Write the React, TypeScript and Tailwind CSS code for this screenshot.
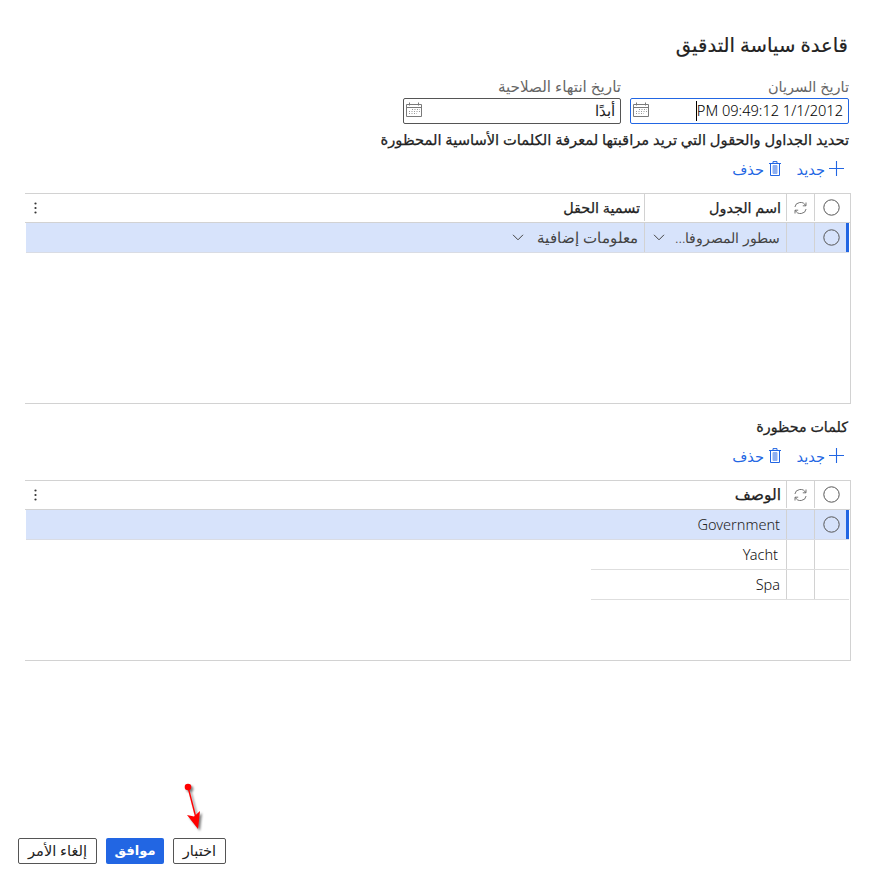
import type { ReactNode } from 'react';

const CalendarIcon = () => (
  <svg width="16" height="16" viewBox="0 0 16 16" fill="none" stroke="#7a7a7a" className="relative -top-px">
    <path d="M.5 2.5h15v12H.5zM.5 5.5h15M3.5 .5v3M12.5 .5v3" />
    <path d="M6 7.5h8M3 9.5h11M3 11.5h8" stroke="#999" strokeDasharray="1 1.5" />
  </svg>
);

const PlusIcon = () => (
  <svg width="15" height="15" viewBox="0 0 15 15" stroke="#2266e3" strokeWidth="1.1" className="relative -top-px">
    <path d="M7.5 0v15M0 7.5h15" />
  </svg>
);

const TrashIcon = () => (
  <svg width="12" height="15" viewBox="0 0 12 15" fill="none" stroke="#2266e3" className="relative -top-px">
    <path d="M0 2.5h12M1.5 2.5v12h9v-12M4 2V.6h4V2" />
    <path d="M4 4.5h4v8H4z" fill="#8fb0f1" stroke="#8fb0f1" />
  </svg>
);

const RefreshIcon = () => (
  <svg width="13" height="12" viewBox="0 0 13 12" fill="none" stroke="#666" strokeWidth=".9">
    <path d="M.9 5A5.6 5.2 0 0 1 11.6 3.6M12.1 7A5.6 5.2 0 0 1 1.4 8.4M12 .5v3.3H8.8M1 11.5V8.2h3.2" />
  </svg>
);

const Circle = () => (
  <svg width="17" height="17" viewBox="0 0 17 17" fill="none" stroke="#555" className="shrink-0">
    <circle cx="8.5" cy="8.5" r="7.7" />
  </svg>
);

const Chevron = () => (
  <svg width="12" height="7" viewBox="0 0 12 7" fill="none" stroke="#444" className="shrink-0">
    <path d="M1 .8l5 5 5-5" />
  </svg>
);

const Dots = () => (
  <svg width="3" height="12" viewBox="0 0 3 12" fill="#333">
    <circle cx="1.5" cy="1.5" r="1.1" />
    <circle cx="1.5" cy="6" r="1.1" />
    <circle cx="1.5" cy="10.5" r="1.1" />
  </svg>
);

function Toolbar() {
  return (
    <div className="flex h-[30px] items-center pr-[5px] text-[14.6px] text-[#2266e3]">
      <PlusIcon />
      <span className="mr-[4px] w-[30px] whitespace-nowrap pt-px">جديد</span>
      <span className="mr-[14px] flex"><TrashIcon /></span>
      <span className="mr-[5px] whitespace-nowrap pt-px">حذف</span>
    </div>
  );
}

function Header({ children }: { children: ReactNode }) {
  return (
    <div className="flex h-[29px] border-b border-[#d2d2d2] text-[14.4px] font-medium text-[#222] [-webkit-text-stroke:0.25px_#222]">
      <div className="flex h-[27px] w-[36px] items-center border-l border-[#d2d2d2] pr-[10px]"><Circle /></div>
      <div className="flex h-[27px] w-[28px] items-center border-l border-[#d2d2d2] pr-[7px]"><RefreshIcon /></div>
      {children}
      <div className="mr-auto flex items-center pl-[9px]"><Dots /></div>
    </div>
  );
}

function Selected({ children }: { children: ReactNode }) {
  return (
    <div className="ml-px mr-px flex h-[30px] border-b border-[#d9dce4] bg-[#d7e3fb] text-[14.5px] font-light text-[#222]">
      <div className="flex w-[35px] items-center border-l border-r-3 border-l-[#d2d2d2] border-r-[#2266e3] pr-[6px]"><Circle /></div>
      <div className="w-[28px] border-l border-[#d2d2d2]" />
      {children}
    </div>
  );
}

function PlainRow({ children }: { children: ReactNode }) {
  return (
    <div className="mr-px flex h-[30px] w-[258px] border-b border-[#dedede] text-[14.5px] font-light text-[#111]">
      <div className="w-[35px] border-l border-[#d2d2d2]" />
      <div className="w-[28px] border-l border-[#d2d2d2]" />
      {children}
    </div>
  );
}

export default function App() {
  return (
    <div dir="rtl" className="flex h-[880px] w-[873px] flex-col overflow-hidden bg-white font-['Noto_Sans','DejaVu_Sans',sans-serif] text-[#222]">
      <h1 className="mr-[25px] mt-[29px] h-[32px] whitespace-nowrap text-[19.6px] leading-[32px] [-webkit-text-stroke:0.2px_#222]">قاعدة سياسة التدقيق</h1>
      <div className="mr-[24px] mt-[15px] flex gap-[9px]">
        <div className="w-[219px]">
          <div className="h-[22px] whitespace-nowrap text-[14.5px] leading-[20px] text-[#666]">تاريخ السريان</div>
          <div className="flex h-[26px] items-center justify-between rounded-[2px] border border-[#2266e3] pl-[2px] pr-[5px]">
            <span dir="ltr" className="flex items-center whitespace-nowrap text-[14.6px] font-light leading-[20px] text-black">
              <i className="h-[20px] w-px bg-black" />
              <span className="relative -top-px">PM 09:49:12 1/1/2012</span>
            </span>
            <CalendarIcon />
          </div>
        </div>
        <div className="w-[218px]">
          <div className="h-[22px] whitespace-nowrap text-[15.2px] leading-[20px] text-[#666]">تاريخ انتهاء الصلاحية</div>
          <div className="flex h-[26px] items-center justify-between rounded-[2px] border border-[#555] pl-[2px] pr-[5px] text-[14.5px] font-light">
            <span>أبدًا</span>
            <CalendarIcon />
          </div>
        </div>
      </div>
      <div className="mr-[24px] mt-[5px] h-[21px] whitespace-nowrap text-[14.7px] font-medium leading-[20px] [-webkit-text-stroke:0.25px_#222]">تحديد الجداول والحقول التي تريد مراقبتها لمعرفة الكلمات الأساسية المحظورة</div>
      <div className="mr-[24px] mt-[4px]"><Toolbar /></div>
      <div className="ml-[25px] mr-[22px] mt-[9px] h-[211px] border-y border-r border-[#d2d2d2]">
        <Header>
          <div className="flex h-[27px] w-[142px] items-center border-l border-[#d2d2d2] pr-[5px]">اسم الجدول</div>
          <div className="flex items-center pr-[4px]">تسمية الحقل</div>
        </Header>
        <Selected>
          <div className="flex w-[142px] items-center justify-between whitespace-nowrap border-l border-[#d2d2d2] pl-[8px] pr-[6px] text-[14.1px] text-[#444]"><span>سطور المصروفا...</span><Chevron /></div>
          <div className="flex w-[132px] items-center justify-between whitespace-nowrap pr-[6px] text-[15.3px] text-[#444]"><span>معلومات إضافية</span><Chevron /></div>
        </Selected>
      </div>
      <div className="mr-[25px] mt-[13px] h-[20px] whitespace-nowrap text-[14.3px] font-medium leading-[20px] [-webkit-text-stroke:0.25px_#222]">كلمات محظورة</div>
      <div className="mr-[24px] mt-[4px]"><Toolbar /></div>
      <div className="ml-[25px] mr-[22px] mt-[9px] h-[181px] border-y border-r border-[#d2d2d2]">
        <Header><div className="flex items-center pr-[5px] text-[15.5px]">الوصف</div></Header>
        <Selected><div className="flex items-center pr-[6px]">Government</div></Selected>
        <PlainRow><div className="flex items-center pr-[8px]">Yacht</div></PlainRow>
        <PlainRow><div className="flex items-center pr-[6px]">Spa</div></PlainRow>
      </div>
      <div className="mr-auto mt-[120px] flex justify-end pl-[180px]">
        <svg width="28" height="50" viewBox="0 0 28 50" className="drop-shadow-[2px_2px_1px_rgba(0,0,0,0.5)]">
          <path d="M8 6l8 31" stroke="#f00" strokeWidth="1.4" />
          <circle cx="8" cy="6" r="3.3" fill="#f00" />
          <path d="M18 48L7 34l7 1.5L20 30z" fill="#f00" />
        </svg>
      </div>
      <div className="mr-auto mt-[7px] flex gap-[9px] pl-[18px] text-[14.6px]">
        <button className="h-[26px] w-[53px] whitespace-nowrap rounded-[2px] border border-[#555] pb-[2px] leading-[22px]">اختبار</button>
        <button className="h-[26px] w-[58px] whitespace-nowrap rounded-[2px] bg-[#2266e3] pb-[2px] text-[13px] font-bold leading-[24px] text-white">موافق</button>
        <button className="h-[26px] w-[79px] whitespace-nowrap rounded-[2px] border border-[#555] pb-[2px] leading-[22px]">إلغاء الأمر</button>
      </div>
    </div>
  );
}
